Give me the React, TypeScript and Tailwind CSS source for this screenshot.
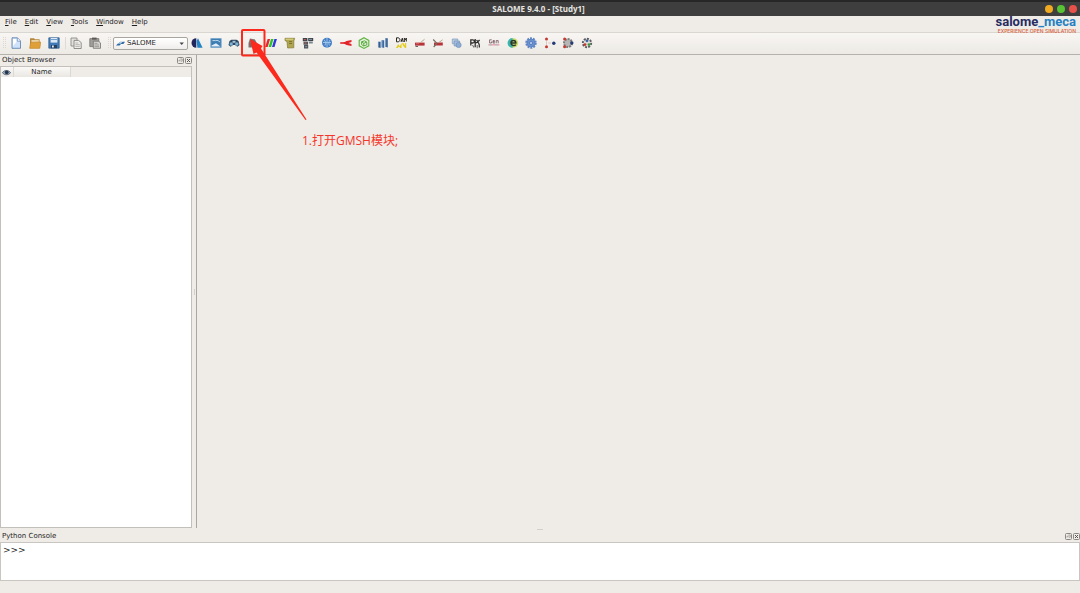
import React from "react";

type Tool = { name: string; art: React.ReactNode };

const files: Tool[] = [
  {
    name: "New",
    art: (
      <>
        <path d="M2 .8h5.5L10.5 4v7.3H2z" fill="#cfe2fb" stroke="#5577a8" strokeWidth=".8" />
        <path d="M3 2h3.5v3L3 9z" fill="#fff" />
        <path d="M7.3 1v3.2h3" fill="#fff" stroke="#6d8fc0" strokeWidth=".8" />
      </>
    ),
  },
  {
    name: "Open",
    art: (
      <>
        <path d="M1 1.2h4l1 1h4.6v9H1z" fill="#b5883d" />
        <path d="M2.4 3h7.4v3H2.4z" fill="#e9d3a4" />
        <path d="M.6 11.3 1.6 5.4 11.8 5l-1 6.3z" fill="#dfa03a" stroke="#c58424" strokeWidth=".6" />
      </>
    ),
  },
  {
    name: "Save",
    art: (
      <>
        <path d="M.8.8h10.400v10.400H.8z" fill="#3f79b8" stroke="#2c5688" strokeWidth=".7" />
        <path d="M2.600 1h6.800v4.600H2.600z" fill="#dce8f4" />
        <path d="M2.600 2.500h6.800" stroke="#6fa0d0" />
        <path d="M3 8h6v3.200H3z" fill="#26415f" />
        <path d="M4 8.600h1.800v2H4z" fill="#e8eef4" />
      </>
    ),
  },
];

const clips: Tool[] = [
  {
    name: "Copy",
    art: (
      <>
        <path d="M1 1h6v8H1z" fill="#e4e2de" stroke="#8d8b87" strokeWidth=".9" />
        <path d="M4 3.4h4.6l2.6 2.2v5.9H4z" fill="#efede9" stroke="#858380" strokeWidth=".9" />
        <path d="M5.3 6h3M5.3 7.7h4.5M5.3 9.4h4.5" stroke="#a19f9b" strokeWidth=".7" />
      </>
    ),
  },
  {
    name: "Paste",
    art: (
      <>
        <path d="M.8 1.6h9v8H.8z" fill="#a19f9b" stroke="#75736f" strokeWidth=".8" />
        <path d="M3 .6h4.600v2H3z" fill="#5b5957" />
        <path d="M4.300 4.200h5.200l2 1.700v5.400H4.300z" fill="#d5d3cf" stroke="#73716e" strokeWidth=".8" />
        <path d="M5.500 6.400h3M5.500 8h4.500M5.500 9.600h4.500" stroke="#8a8884" strokeWidth=".7" />
      </>
    ),
  },
];

const modules: Tool[] = [
  {
    name: "Shaper",
    art: (
      <>
        <path d="M5.300 1.200v9.600A4.800 4.800 0 0 1 5.300 1.200z" fill="#20265c" />
        <path d="M7 1.200 11.600 10.800H6.400L5.600 4z" fill="#2183c6" />
      </>
    ),
  },
  {
    name: "Geometry",
    art: (
      <>
        <path d="M.8 1.5h10.4v9H.8z" fill="#3d7db2" stroke="#76a4cb" strokeWidth=".8" />
        <path d="M1.500 8.500 6 6.300l4.500 3.200h-9z" fill="#e1eff8" />
        <path d="M2.500 3.600h3c2-.6 3.500.4 4.500 1.500" stroke="#c0dded" fill="none" />
      </>
    ),
  },
  {
    name: "Mesh",
    art: (
      <>
        <path d="M1.5 4 3.4 2.8h5.2L10.5 4l1 4-2 1.8L7 8H5L2.6 9.8.5 8z" fill="#2c4661" />
        <circle cx="3.2" cy="7" r="1.7" fill="#7fb3d4" />
        <circle cx="8.8" cy="7" r="1.7" fill="#7fb3d4" />
        <path d="M4.5 3.8h3v2h-3z" fill="#aac4d6" />
      </>
    ),
  },
  {
    name: "GMSH",
    art: (
      <>
        <path d="M3 1.5 8 2.6l2.500 5v3H1.500V6z" fill="#737779" />
        <path d="m2 7 8 1M4 3l5 7M7 2.600 3 10" stroke="#b1463e" strokeWidth=".8" />
      </>
    ),
  },
  {
    name: "Fields",
    art: (
      <>
        <path d="M2.6 2h2.5L2.700 10H.2z" fill="#e22730" />
        <path d="M6 2h2.500L6.100 10H3.600z" fill="#27c22f" />
        <path d="M9.400 2h2.500L9.500 10H7z" fill="#3135d5" />
      </>
    ),
  },
  {
    name: "YACS",
    art: (
      <>
        <path d="M1 1.300h9.700L9.800 4v6.800L3.600 11 3 4.500 1 3.600z" fill="#b0a650" stroke="#837a34" strokeWidth=".7" />
        <path d="M5 4.600h3M5 6.500h3" stroke="#6f6724" strokeWidth=".8" />
        <path d="M1.600 2.200h7.600" stroke="#e0d989" />
      </>
    ),
  },
  {
    name: "JobManager",
    art: (
      <>
        <path d="M.8 1h4.600v3.300H.8zM6.200 1h5v3h-5z" fill="#3e454d" />
        <path d="M1.500 4.700h4.500v3H1.500zM2 8h4.200v3.500H2z" fill="#50565e" />
        <path d="M6.800 4.500h4v2h-4z" fill="#7b8791" />
        <path d="M1.800 2.600h2M2.600 6h2" stroke="#c55d55" />
        <path d="M7 2.400h3M3.200 9.700h2" stroke="#9aafc0" strokeWidth=".8" />
      </>
    ),
  },
  {
    name: "Atomic",
    art: (
      <>
        <circle cx="6" cy="5.800" r="5" fill="#447fc5" />
        <path d="M3 3c1.500.6 2 3 1 5.500M6 1v9.600M9 3c-1.500 2-1.500 4-.3 5.500M2 5.500h8" stroke="#a4c8ee" strokeWidth=".9" fill="none" />
      </>
    ),
  },
  {
    name: "ParaViS connector",
    art: (
      <>
        <path d="M.2 6H6" stroke="#e3242b" strokeWidth="1.6" />
        <path d="M3 6 6.500 4 11.500 3v2L8.500 6l3 1v2L6.500 8z" fill="#e3242b" />
      </>
    ),
  },
  {
    name: "HexaBlock",
    art: (
      <>
        <path d="m6 .7 4.800 2.700v5.400L6 11.400 1.200 8.800V3.400z" fill="#e2f2da" stroke="#61b444" strokeWidth="1.100" />
        <path d="m3.600 4.800 3-1 2.200 1.500v2.600L5.600 9l-2-1.500zM3.600 4.800l2.200 1.500L8.800 5M5.800 6.300V9" fill="none" stroke="#4fa335" strokeWidth=".9" />
      </>
    ),
  },
  {
    name: "Homard",
    art: (
      <>
        <path d="M1 4.800h2.600V11L1 10.200z" fill="#335c8d" />
        <path d="M4.600 3.200h2.600V11l-2.600-.8z" fill="#3c6aa0" />
        <path d="M8.200 1.200h2.600v9.300l-2.600-.8z" fill="#3a6598" />
        <path d="M1.400 5v5M5 3.400v7M8.600 1.400v8.400" stroke="#8eb1d5" strokeWidth=".7" />
      </>
    ),
  },
  {
    name: "Data assimilation",
    art: (
      <>
        <path d="M1.500.8h1.600c2.600.4 2.400 4-.2 4H1.500zM6 5 7.300 1.200 8.200 5M9.300 5V1.200l1 1.600 1-1.800v3.500" fill="none" stroke="#25241f" />
        <path d="m1 11 2.200-4 1.600 2.200L6.600 6v5H5.200L4 9.600 2.600 11zM7 6h1.300l1.700 2.500V6h1.200v5H10L8 8.800z" fill="#e3cd1c" />
      </>
    ),
  },
  {
    name: "Europlexus",
    art: (
      <>
        <path d="M1 5.600h9.600v3H1z" fill="#b8323a" />
        <path d="m6.500 5.600 4-3.300" stroke="#b7a88b" />
        <path d="M1.500 9.400h2.500" stroke="#59584d" />
        <path d="M2 6.700h3" stroke="#df7272" strokeWidth=".8" />
      </>
    ),
  },
  {
    name: "Europlexus viewer",
    art: (
      <>
        <path d="M2 5.500h8.800v3H2z" fill="#b8323a" />
        <path d="m1.200 2.500 3.600 3.700L1.700 10" fill="none" stroke="#716f63" strokeWidth="1.200" />
        <path d="m7 5.400 3.600-2.600" stroke="#b7a88b" />
      </>
    ),
  },
  {
    name: "Stack",
    art: (
      <>
        <path d="M1.3 2h5.500v4.800H1.300z" fill="#b9cce2" stroke="#7e99bd" strokeWidth=".7" />
        <path d="M3.200 4h5.400v5H3.200z" fill="#a4bddb" stroke="#7894ba" strokeWidth=".7" />
        <circle cx="7.600" cy="8" r="2.600" fill="#8eadd4" stroke="#6d8bb5" strokeWidth=".6" />
      </>
    ),
  },
  {
    name: "PyHello",
    art: (
      <>
        <path d="M1.800 8.500V2.800h2c2.300.2 2 3.200-.2 3.200H1.800M6.200 2v8.200M6.400 6c3-1.500 4-.2 4 4.500M7.600 3l1.200 1.800L10.600 3" fill="none" stroke="#303030" strokeWidth="1.300" />
        <path d="M8.200 8v3.300M3.500 8 5 10.500" stroke="#6f6f6f" strokeWidth="1.100" />
      </>
    ),
  },
  {
    name: "Gen",
    art: (
      <>
        <path d="M.4 7.800h11" stroke="#efa1ae" strokeWidth="1.5" />
        <path d="M3.700 2.800H1.600V6h2V4.500M5 4.700h2M6.800 3.600H5V6h2M8.200 6.300V3.600h2v2.700" fill="none" stroke="#73515e" strokeWidth=".8" />
        <path d="M1 7.900h3M7 7.900h3" stroke="#93cfc5" strokeWidth=".8" />
      </>
    ),
  },
  {
    name: "Eficas",
    art: (
      <>
        <circle cx="6.500" cy="6" r="4.700" fill="#c9de6b" />
        <path d="M5.600.9A5 5 0 0 0 5.600 11z" fill="#3ab5ad" />
        <path d="M4.200 6h4.600c0-3.300-4.800-3.300-4.800 0 0 3 3.700 3 4.800 1.600" fill="none" stroke="#2c3528" strokeWidth="1.500" />
      </>
    ),
  },
  {
    name: "OpenTURNS",
    art: (
      <>
        <circle cx="6" cy="6" r="4.800" fill="none" stroke="#5f86c6" strokeWidth="1.800" strokeDasharray="2 1" />
        <circle cx="6" cy="6" r="4" fill="#6c93d0" stroke="#5a81c3" />
        <circle cx="6" cy="6" r="1.700" fill="#a6c0e8" stroke="#456fb5" strokeWidth=".7" />
      </>
    ),
  },
  {
    name: "Graph",
    art: (
      <>
        <circle cx="2.500" cy="1.900" r="1.500" fill="#c5392e" />
        <circle cx="2.500" cy="9.800" r="1.500" fill="#c5392e" />
        <circle cx="9.800" cy="6.200" r="1.700" fill="#22397a" />
        <path d="M2.500 4.200v3.600M4.300 6h3" stroke="#d4b5ac" strokeWidth=".7" />
      </>
    ),
  },
  {
    name: "Linked gears",
    art: (
      <>
        <circle cx="6" cy="6" r="4" fill="#b6b6b4" stroke="#7d7d7d" strokeWidth="2" strokeDasharray="2 1" />
        <circle cx="2.600" cy="2" r="1.500" fill="#c5392e" />
        <circle cx="2.600" cy="9.800" r="1.500" fill="#c5392e" />
        <circle cx="9.800" cy="6" r="1.700" fill="#263b72" />
      </>
    ),
  },
  {
    name: "Code Aster",
    art: (
      <>
        <circle cx="6" cy="6" r="4.200" fill="#dedcd8" stroke="#5b5c5e" strokeWidth="1.900" strokeDasharray="2 1.200" />
        <circle cx="6" cy="3.800" r="1.400" fill="#3b60ae" />
        <circle cx="4" cy="7.600" r="1.400" fill="#c8372f" />
        <circle cx="8" cy="7.600" r="1.400" fill="#3c9a44" />
      </>
    ),
  },
];

function ToolButton({ tool }: { tool: Tool }) {
  return (
    <button type="button" aria-label={tool.name} className="size-3 shrink-0">
      <svg viewBox="0 0 12 12" className="block size-3" fill="none" aria-hidden="true">
        {tool.art}
      </svg>
    </button>
  );
}

function Grip() {
  return (
    <svg viewBox="0 0 3 12" className="h-3 w-[3px] shrink-0" aria-hidden="true">
      <path d="M.5 0v12M2.5 0v12" stroke="#dbd8d3" strokeDasharray="1 1" />
    </svg>
  );
}

function DockTitle({ title }: { title: string }) {
  return (
    <header className="flex h-[11px] shrink-0 items-center justify-between pl-0.5">
      <h2 className="leading-[9px]">{title}</h2>
      <div className="flex gap-px">
        <button type="button" aria-label={`Float ${title}`} className="size-[7px]">
          <svg viewBox="0 0 7 7" className="block size-[7px]" fill="none" stroke="#8b8883">
            <rect x=".5" y=".5" width="6" height="6" rx="1" />
            <path d="M2 4.5V3.2h1.6M3.4 2h1.8v2.2H3.6" strokeWidth=".7" />
          </svg>
        </button>
        <button type="button" aria-label={`Close ${title}`} className="size-[7px]">
          <svg viewBox="0 0 7 7" className="block size-[7px]" fill="none" stroke="#8b8883">
            <rect x=".5" y=".5" width="6" height="6" rx="1" />
            <path d="m2 2 3 3M5 2 2 5" stroke="#55524f" />
          </svg>
        </button>
      </div>
    </header>
  );
}

const menus = ["File", "Edit", "View", "Tools", "Window", "Help"];

export default function App() {
  return (
    <div className="relative flex min-h-screen flex-col bg-[#efebe7] font-['DejaVu_Sans',sans-serif] text-[7px] leading-none text-[#1f1f1f]">
      <div className="grid h-4 shrink-0 grid-cols-[1fr_auto_1fr] items-center border-t-2 border-[#272727] bg-[#3e3e3e] pr-[3px]">
        <h1 className="col-start-2 font-['Open_Sans',sans-serif] text-[8px] font-bold text-[#e6e4e0]">
          SALOME 9.4.0 - [Study1]
        </h1>
        <div className="flex justify-end gap-1">
          <button type="button" aria-label="Minimize" className="size-2 rounded-full bg-[#f2ab20]" />
          <button type="button" aria-label="Maximize" className="size-2 rounded-full bg-[#57c234]" />
          <button type="button" aria-label="Close window" className="size-2 rounded-full bg-[#e8504a]" />
        </div>
      </div>

      <div className="flex h-4 shrink-0 items-start justify-between pr-1 pl-[5px]">
        <nav className="flex gap-2 pt-[2px]">
          {menus.map((m) => (
            <button key={m} type="button" className="leading-[8px]">
              <span className="underline decoration-1 underline-offset-1">{m[0]}</span>
              {m.slice(1)}
            </button>
          ))}
        </nav>
        <div className="z-10 flex flex-col items-end">
          <span className="font-['Roboto',sans-serif] text-[13px] leading-[12px] font-bold text-[#262c62]">
            salome<span className="text-[#2581c4]">_meca</span>
          </span>
          <span className="font-['Inter',sans-serif] text-[5px] leading-[6px] font-medium text-[#d9623a]">
            EXPERIENCE OPEN SIMULATION
          </span>
        </div>
      </div>

      <div className="flex h-[23px] shrink-0 items-center border-t border-b border-t-[#dad7d3] border-b-[#b5b2ad] bg-linear-to-b from-[#f8f6f3] to-[#edeae5] pb-px pl-[3px]">
        <Grip />
        <div className="ml-1 flex gap-[7px]">
          {files.map((t) => (
            <ToolButton key={t.name} tool={t} />
          ))}
        </div>
        <div className="ml-[5px] h-3 w-px bg-[#dedbd6]" />
        <div className="ml-1 flex gap-[7px]">
          {clips.map((t) => (
            <ToolButton key={t.name} tool={t} />
          ))}
        </div>
        <div className="ml-[7px] flex items-center gap-[2px]">
          <Grip />
          <div className="grid items-center">
            <select
              aria-label="Module"
              className="col-start-1 row-start-1 h-[13px] w-[75px] appearance-none rounded-[2px] border border-[#a9a6a1] bg-linear-to-b from-white to-[#f0eeeb] pl-[13px] text-[7px] leading-none"
            >
              <option>SALOME</option>
            </select>
            <svg viewBox="0 0 75 13" className="pointer-events-none col-start-1 row-start-1 h-[13px] w-[75px]" aria-hidden="true">
              <path d="m3 8.6 2-2h3l1.500-1.800H12L10.400 7H8L6.500 8.600z" fill="#2d6aa8" />
              <path d="M5.500 6.500 7 5.200h2" stroke="#78a8d4" strokeWidth=".8" fill="none" />
              <path d="M66.500 5.400h4.400L68.700 8z" fill="#444" />
            </svg>
          </div>
        </div>
        <div className="ml-[3px] flex w-[402px] justify-between">
          {modules.map((t) => (
            <ToolButton key={t.name} tool={t} />
          ))}
        </div>
      </div>

      <main className="flex grow">
        <section className="flex w-48 shrink-0 flex-col">
          <DockTitle title="Object Browser" />
          <div className="grow border border-[#c3c0bb] bg-white">
            <table className="w-full table-fixed border-collapse">
              <thead>
                <tr className="h-[10px] bg-[#efebe7]">
                  <th className="w-3 border-r border-[#dcd9d4] bg-linear-to-b from-[#faf9f7] to-[#eae7e3] p-0" aria-label="Visibility">
                    <svg viewBox="0 0 9 7" className="mx-auto block h-[7px] w-[9px]" aria-hidden="true">
                      <path d="M.4 3.700C2.500.8 6.500.8 8.600 3.700 6.500 6.400 2.500 6.400.4 3.700z" fill="#aebccb" stroke="#3d4858" strokeWidth=".8" />
                      <circle cx="4.700" cy="3.300" r="1.900" fill="#24354f" />
                    </svg>
                  </th>
                  <th className="w-[57px] border-r border-[#dcd9d4] bg-linear-to-b from-[#faf9f7] to-[#eae7e3] p-0 text-center font-normal">
                    Name
                  </th>
                  <th className="p-0" aria-label="Value" />
                </tr>
              </thead>
            </table>
          </div>
        </section>
        <div className="flex w-1 shrink-0 items-center justify-center">
          <div className="h-[6px] w-px bg-[#d3cfca]" />
        </div>
        <section aria-label="Workspace" className="grow border-l border-[#aaa7a2]" />
      </main>

      <div className="flex h-[3px] shrink-0 items-center justify-center">
        <div className="h-px w-[6px] bg-[#d3cfca]" />
      </div>
      <section className="flex shrink-0 flex-col">
        <DockTitle title="Python Console" />
        <textarea
          aria-label="Python Console input"
          spellCheck={false}
          defaultValue=">>>"
          className="block h-[39px] w-full resize-none overflow-hidden border border-[#c9c6c1] bg-white px-[2px] py-[2px] text-[9px] leading-[10px] outline-none"
        />
      </section>
      <footer className="h-3 shrink-0" />

      <div className="pointer-events-none absolute top-[29px] left-[241px] z-20">
        <svg viewBox="0 0 70 94" className="block h-[94px] w-[70px]" aria-hidden="true">
          <rect x="1" y="1" width="22.500" height="25.500" rx="1" fill="none" stroke="#fb2a1c" strokeWidth="2" />
          <path d="M9 10 21.500 17 20 19.500 65.500 90.500 64.500 91 15.500 23.500 12.500 25z" fill="#fb2a1c" />
        </svg>
        <p className="pl-[61px] font-['Open_Sans','Noto_Sans_CJK_SC',sans-serif] text-[12px] leading-[36px] whitespace-nowrap text-[#f5352a]">
          1.打开GMSH模块;
        </p>
      </div>
    </div>
  );
}
